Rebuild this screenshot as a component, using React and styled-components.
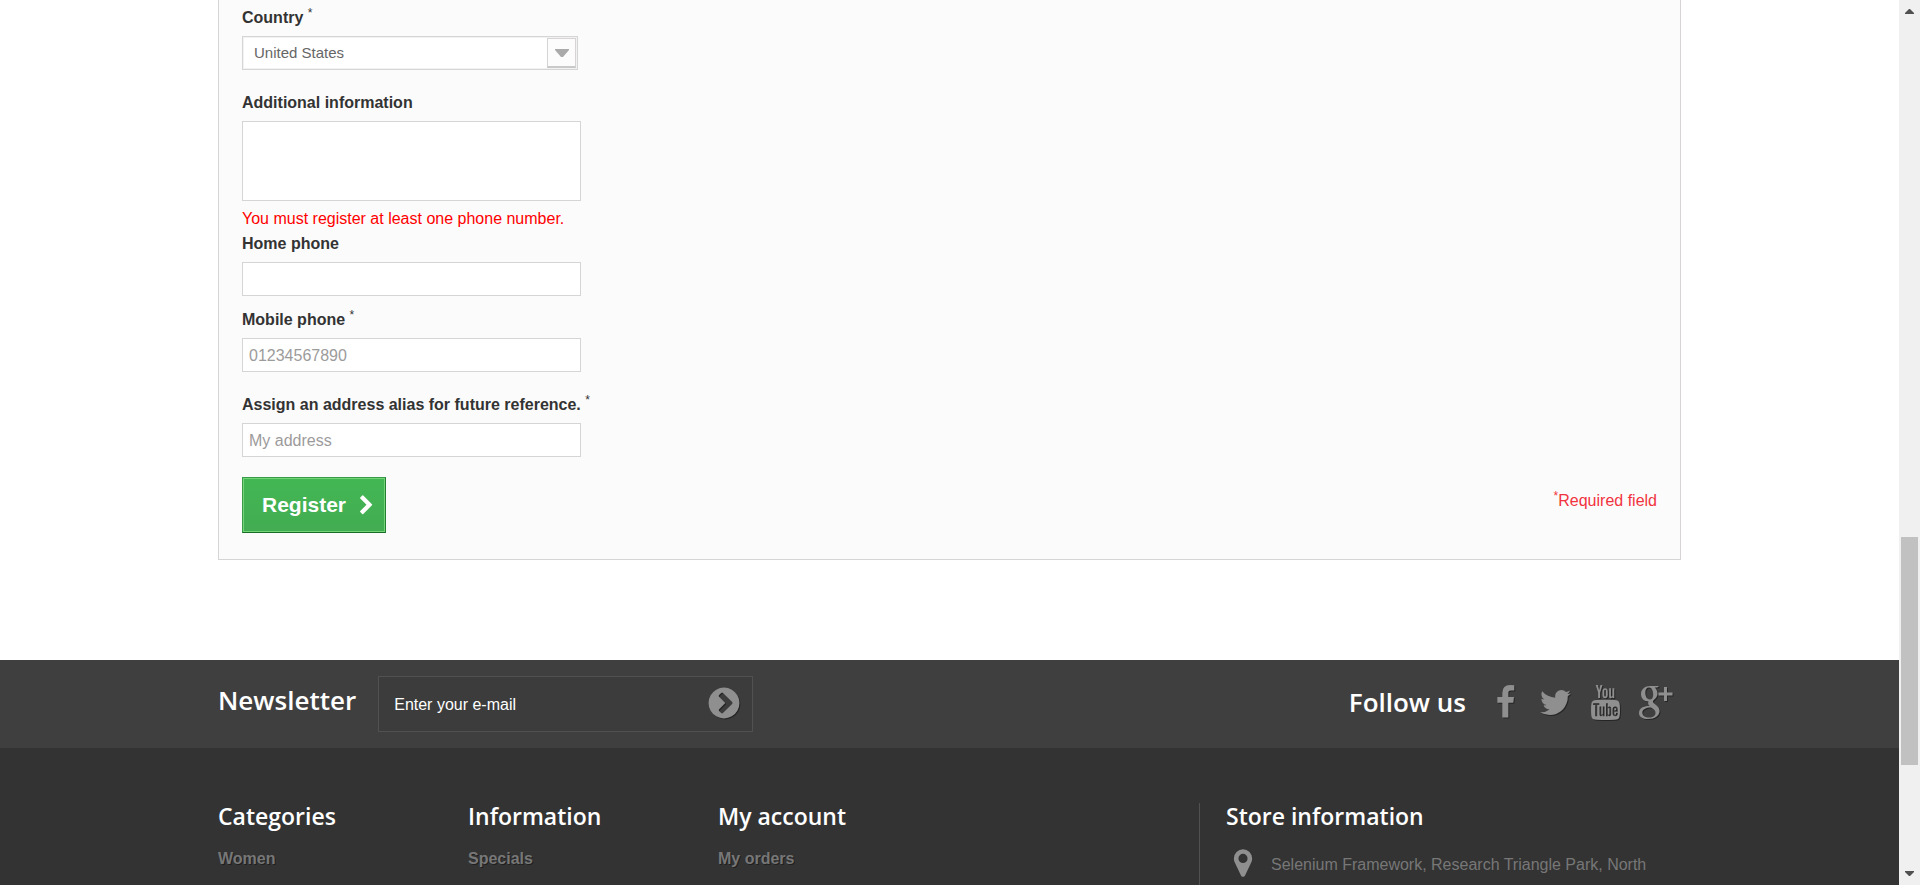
import React from "react";
import styled, { createGlobalStyle } from "styled-components";

const GlobalStyle = createGlobalStyle`
  *, *::before, *::after { box-sizing: border-box; }
  body {
    margin: 0;
    background: #fff;
    color: #777;
    font: 16px/20px Arial, "Liberation Sans", sans-serif;
  }
  h2, h3, p, ul { margin: 0; padding: 0; }
  ul { list-style: none; }
`;

const Window = styled.div`
  display: grid;
  grid-template-columns: minmax(0, 1fr) 21px;
  height: 100vh;
  overflow: hidden;
`;

const Page = styled.div`
  display: flex;
  flex-direction: column;
  min-width: 0;
  overflow: hidden;
`;

const Container = styled.div`
  width: 100%;
  max-width: 1463px;
  margin: 0 auto;
`;

const Panel = styled.form`
  padding: 8px 23px 26px;
  margin-bottom: 100px;
  background: #fbfbfb;
  border: 1px solid #d6d4d4;
  border-top: 0;
`;

const Field = styled.div`
  display: flex;
  flex-direction: column;
  align-items: flex-start;
  margin-bottom: ${(p) => p.$gap}px;
`;

const Label = styled.label`
  margin-bottom: 8px;
  color: #333;
  font-weight: 700;
`;

const Star = styled.sup`
  font-size: 12px;
  font-weight: 400;
  line-height: 0;
`;

const TextInput = styled.input`
  width: 339px;
  max-width: 100%;
  height: 34px;
  padding: 2px 6px 0;
  border: 1px solid #d6d4d4;
  border-radius: 0;
  background: #fff;
  color: #9c9b9b;
  font: inherit;
`;

const TextArea = styled.textarea`
  display: block;
  width: 339px;
  max-width: 100%;
  height: 80px;
  padding: 7px;
  border: 1px solid #d6d4d4;
  background: #fff;
  font: inherit;
  resize: none;
`;

const SelectBox = styled.div`
  display: grid;
  width: 336px;
  max-width: 100%;
  height: 34px;
  border: 1px solid #d6d4d4;
  background: #fff;
  box-shadow: inset 0 0 0 1px #f2f2f2;
  > * { grid-area: 1 / 1; }
`;

const Select = styled.select`
  appearance: none;
  width: 100%;
  padding: 0 40px 0 11px;
  border: 0;
  background: transparent;
  color: #666;
  font: 15px/20px Arial, "Liberation Sans", sans-serif;
`;

const SelectArrow = styled.span`
  display: flex;
  align-items: center;
  justify-content: center;
  justify-self: end;
  align-self: center;
  width: 29px;
  height: 30px;
  margin-right: 1px;
  border: 1px solid #d6d4d4;
  border-bottom: 2px solid #c9c9c9;
  background: #fcfcfc;
  pointer-events: none;
`;

const ErrorText = styled.p`
  margin-bottom: 5px;
  color: #f00;
`;

const Actions = styled.div`
  display: flex;
  justify-content: space-between;
  align-items: flex-start;
`;

const RegisterButton = styled.button`
  display: flex;
  align-items: center;
  gap: 10px;
  height: 56px;
  padding: 0 8px 0 19px;
  border: 1px solid;
  border-color: #399a49 #247f32 #1a6d27 #399a49;
  background: linear-gradient(#43b754, #42ac52);
  box-shadow: inset 0 0 0 1px #74d578;
  color: #fff;
  font: 700 21px/24px Arial, "Liberation Sans", sans-serif;
`;

const Required = styled.p`
  padding-top: 14px;
  color: #f13340;
`;

const NewsBar = styled.section`
  flex: none;
  background: #3f3f3f;
`;

const BarRow = styled(Container)`
  display: flex;
  justify-content: space-between;
  align-items: center;
  height: 88px;
`;

const Newsletter = styled.form`
  display: flex;
  align-items: center;
  gap: 22px;
`;

const BarTitle = styled.h2`
  padding-bottom: ${(p) => p.$lift}px;
  color: #fff;
  font: 600 26px/32px "Open Sans", sans-serif;
`;

const MailBox = styled.div`
  display: flex;
  align-items: center;
  width: 375px;
  height: 56px;
  padding: 0 10px 0 15px;
  border: 1px solid #515151;
  background: #3c3c3c;
`;

const MailInput = styled.input`
  flex: 1;
  min-width: 0;
  padding: 2px 0 0;
  border: 0;
  background: transparent;
  color: #fff;
  font: inherit;
  &::placeholder { color: #fff; opacity: 1; }
`;

const IconButton = styled.button`
  display: flex;
  padding: 0 0 3px;
  border: 0;
  background: none;
  color: #908f8f;
`;

const Follow = styled.div`
  display: flex;
  align-items: center;
  gap: 14px;
`;

const SocialList = styled.ul`
  display: flex;
  padding: 0 1px 3px 0;
`;

const SocialLink = styled.a`
  display: flex;
  align-items: center;
  justify-content: center;
  width: 50px;
  height: 40px;
  color: #908f8f;
`;

const Glyph = styled.svg`
  display: block;
  width: ${(p) => p.$size}px;
  height: ${(p) => p.$size}px;
  fill: currentColor;
  filter: ${(p) => (p.$shadow ? "drop-shadow(1px 1px 0 rgba(0, 0, 0, 0.4))" : "none")};
`;

const Footer = styled.footer`
  flex: 1;
  padding-top: 55px;
  background: #333;
`;

const FooterRow = styled(Container)`
  display: grid;
  grid-template-columns: 250px 250px minmax(0, 1fr) 482px;
  height: 100%;
`;

const FooterTitle = styled.h3`
  margin-bottom: 18px;
  color: #fff;
  font: 600 23px/26px "Open Sans", sans-serif;
`;

const FooterLink = styled.a`
  display: inline-block;
  padding-top: 2px;
  color: #777;
  font-weight: 700;
  text-decoration: none;
  text-shadow: 1px 1px 0 rgba(0, 0, 0, 0.4);
`;

const Store = styled.section`
  padding-left: 26px;
  border-left: 1px solid #515151;
`;

const Address = styled.div`
  display: flex;
  align-items: flex-start;
  gap: 11px;
  color: #777;
`;

const AddressText = styled.p`
  padding-top: 8px;
`;

const Pin = styled.span`
  display: flex;
  justify-content: center;
  width: 34px;
  color: #908f8f;
`;

const ScrollTrack = styled.div`
  display: flex;
  flex-direction: column;
  align-items: center;
  padding: 9px 0 9px;
  background: #f0f0f0;
`;

const TrackSpace = styled.div`
  flex: ${(p) => p.$grow} 1 0;
`;

const Thumb = styled.div`
  flex: 228 1 0;
  width: 17px;
  background: #c1c1c1;
`;

const PATHS = {
  chevron:
    "M1363 877l-742 742q-19 19-45 19t-45-19l-166-166q-19-19-19-45t19-45l531-531-531-531q-19-19-19-45t19-45l166-166q19-19 45-19t45 19l742 742q19 19 19 45t-19 45z",
  chevronCircle:
    "M845 1395l454-454q19-19 19-45t-19-45l-454-454q-19-19-45-19t-45 19l-102 102q-19 19-19 45t19 45l307 307-307 307q-19 19-19 45t19 45l102 102q19 19 45 19t45-19zm819-499q0 209-103 385.500t-279.500 279.500-385.500 103-385.500-103-279.500-279.500-103-385.500 103-385.500 279.500-279.500 385.500-103 385.500 103 279.500 279.500 103 385.500z",
  facebook:
    "M1343 12v264h-157q-86 0-116 36t-30 108v189h293l-39 296h-254v759h-306v-759h-255v-296h255v-218q0-186 104-288.500t277-102.500q147 0 228 12z",
  twitter:
    "M1684 408q-67 98-162 167 1 14 1 42 0 130-38 259.500t-115.500 248.500-184.500 210.500-258 146-323 54.500q-271 0-496-145 35 4 78 4 225 0 401-138-105-2-188-64.500t-114-159.500q33 5 61 5 43 0 85-11-112-23-185.500-111.500t-73.500-205.500v-4q68 38 146 41-66-44-105-115t-39-154q0-88 44-163 121 149 294.500 238.500t371.500 99.500q-8-38-8-74 0-134 94.500-228.500t228.500-94.500q140 0 236 102 109-21 205-78-37 115-142 178 93-10 186-50z",
  youtube:
    "M1099 1244v211q0 67-39 67-23 0-45-22v-301q22-22 45-22 39 0 39 67zm338 1v46h-90v-46q0-68 45-68t45 68zm-966-218h107v-94h-312v94h105v569h100v-569zm288 569h89v-494h-89v378q-30 42-57 42-18 0-21-21-1-3-1-35v-364h-89v391q0 49 8 73 12 37 58 37 48 0 102-61v54zm429-148v-197q0-73-9-99-17-56-71-56-50 0-93 54v-217h-89v663h89v-48q45 55 93 55 54 0 71-55 9-27 9-100zm338-10v-13h-91q0 51-2 61-7 36-40 36-46 0-46-69v-87h179v-103q0-79-27-116-39-51-106-51-68 0-107 51-28 37-28 116v173q0 79 29 116 39 51 108 51 72 0 108-53 18-27 21-54 2-9 2-58zm-608-913v-210q0-69-43-69t-43 69v210q0 70 43 70t43-70zm719 751q0 234-26 350-14 59-58 99t-102 46q-184 21-555 21t-555-21q-58-6-102.500-46t-57.500-99q-26-112-26-350 0-234 26-350 14-59 58-99t103-47q183-20 554-20t555 20q58 7 102.500 47t57.500 99q26 112 26 350zm-998-1276h102l-121 399v271h-100v-271q-14-74-61-212-37-103-65-187h106l71 263zm370 333v175q0 81-28 118-38 51-106 51-67 0-105-51-28-38-28-118v-175q0-80 28-117 38-51 105-51 68 0 106 51 28 37 28 117zm335-162v499h-91v-55q-53 62-103 62-46 0-59-37-8-24-8-75v-394h91v367q0 33 1 35 3 22 21 22 27 0 57-43v-381h91z",
  pin:
    "M1152 640q0-106-75-181t-181-75-181 75-75 181 75 181 181 75 181-75 75-181zm256 0q0 109-33 179l-364 774q-16 33-47.500 52t-67.500 19-67.500-19-46.500-52l-365-774q-33-70-33-179 0-212 150-362t362-150 362 150 150 362z",
};

const Icon = ({ name, size, shadow }) => (
  <Glyph viewBox="0 0 1792 1792" $size={size} $shadow={shadow} aria-hidden="true">
    <path d={PATHS[name]} />
  </Glyph>
);

const GooglePlusIcon = () => (
  <Glyph viewBox="0 0 35 35" $size={35} $shadow aria-hidden="true">
    <path
      fillRule="evenodd"
      d="M21 1h-9C7 1 3 4.500 3 9s3 7.500 7.500 7.500c-1 2 .2 3.500 1.200 4.500C5 21 1 23.500 1 28c0 4 4 6 9 6 7 0 11.500-3.500 11.500-8 0-3.500-2.200-5-4.700-7-2-1.600-2.500-2.500-1-4C18.300 13 19.500 11 19.500 8.500c0-2.500-1.200-4.500-2.700-6h2.500zM11 2.500c3 0 4.200 3.500 4.200 7 0 3-1.200 5-3.200 5-3.500 0-4.700-4-4.700-7s1.200-5 3.700-5zM13 22.500c3 2 4.500 3 4.500 5.500 0 2.500-2.200 4.500-6.500 4.500-4 0-6.700-2-6.700-5s3.700-5 8.700-5zM26 2h3v5.500h5.500v3H29V16h-3v-5.500h-5.500v-3H26z"
    />
  </Glyph>
);

const SOCIAL = [
  { label: "Facebook", icon: <Icon name="facebook" size={35} shadow /> },
  { label: "Twitter", icon: <Icon name="twitter" size={35} shadow /> },
  { label: "Youtube", icon: <Icon name="youtube" size={35} shadow /> },
  { label: "Google Plus", icon: <GooglePlusIcon /> },
];

const COLUMNS = [
  { title: "Categories", link: "Women" },
  { title: "Information", link: "Specials" },
  { title: "My account", link: "My orders" },
];

export default function App() {
  return (
    <Window>
      <GlobalStyle />
      <Page>
        <Container as="main">
          <Panel onSubmit={(e) => e.preventDefault()}>
            <Field $gap={23}>
              <Label htmlFor="country">
                Country <Star>*</Star>
              </Label>
              <SelectBox>
                <Select id="country" defaultValue="us">
                  <option value="us">United States</option>
                </Select>
                <SelectArrow>
                  <svg width="14" height="8" viewBox="0 0 14 8" aria-hidden="true">
                    <path d="M0 0h14v1L8 8H6L0 1z" fill="#aaa" />
                  </svg>
                </SelectArrow>
              </SelectBox>
            </Field>
            <Field $gap={8}>
              <Label htmlFor="other">Additional information</Label>
              <TextArea id="other" />
            </Field>
            <ErrorText>You must register at least one phone number.</ErrorText>
            <Field $gap={14}>
              <Label htmlFor="phone">Home phone</Label>
              <TextInput id="phone" type="tel" />
            </Field>
            <Field $gap={23}>
              <Label htmlFor="mobile">
                Mobile phone <Star>*</Star>
              </Label>
              <TextInput id="mobile" type="tel" defaultValue="01234567890" />
            </Field>
            <Field $gap={20}>
              <Label htmlFor="alias">
                Assign an address alias for future reference. <Star>*</Star>
              </Label>
              <TextInput id="alias" type="text" defaultValue="My address" />
            </Field>
            <Actions>
              <RegisterButton type="submit">
                Register
                <Icon name="chevron" size={21} />
              </RegisterButton>
              <Required>
                <Star>*</Star>Required field
              </Required>
            </Actions>
          </Panel>
        </Container>

        <NewsBar>
          <BarRow>
            <Newsletter onSubmit={(e) => e.preventDefault()}>
              <BarTitle $lift={8}>Newsletter</BarTitle>
              <MailBox>
                <MailInput type="email" placeholder="Enter your e-mail" aria-label="Enter your e-mail" />
                <IconButton type="submit" aria-label="Subscribe">
                  <Icon name="chevronCircle" size={36} shadow />
                </IconButton>
              </MailBox>
            </Newsletter>
            <Follow>
              <BarTitle $lift={4}>Follow us</BarTitle>
              <SocialList>
                {SOCIAL.map((s) => (
                  <li key={s.label}>
                    <SocialLink href="#" aria-label={s.label}>
                      {s.icon}
                    </SocialLink>
                  </li>
                ))}
              </SocialList>
            </Follow>
          </BarRow>
        </NewsBar>

        <Footer>
          <FooterRow>
            {COLUMNS.map((c) => (
              <section key={c.title}>
                <FooterTitle>{c.title}</FooterTitle>
                <FooterLink href="#">{c.link}</FooterLink>
              </section>
            ))}
            <Store>
              <FooterTitle>Store information</FooterTitle>
              <Address>
                <Pin>
                  <Icon name="pin" size={32} />
                </Pin>
                <AddressText>Selenium Framework, Research Triangle Park, North</AddressText>
              </Address>
            </Store>
          </FooterRow>
        </Footer>
      </Page>
      <ScrollTrack aria-hidden="true">
        <svg width="9" height="5" viewBox="0 0 9 5">
          <path d="M4 0h1l4 4v1H0V4z" fill="#505050" />
        </svg>
        <TrackSpace $grow={523} />
        <Thumb />
        <TrackSpace $grow={106} />
        <svg width="9" height="5" viewBox="0 0 9 5">
          <path d="M0 0h9v1L5 5H4L0 1z" fill="#505050" />
        </svg>
      </ScrollTrack>
    </Window>
  );
}
